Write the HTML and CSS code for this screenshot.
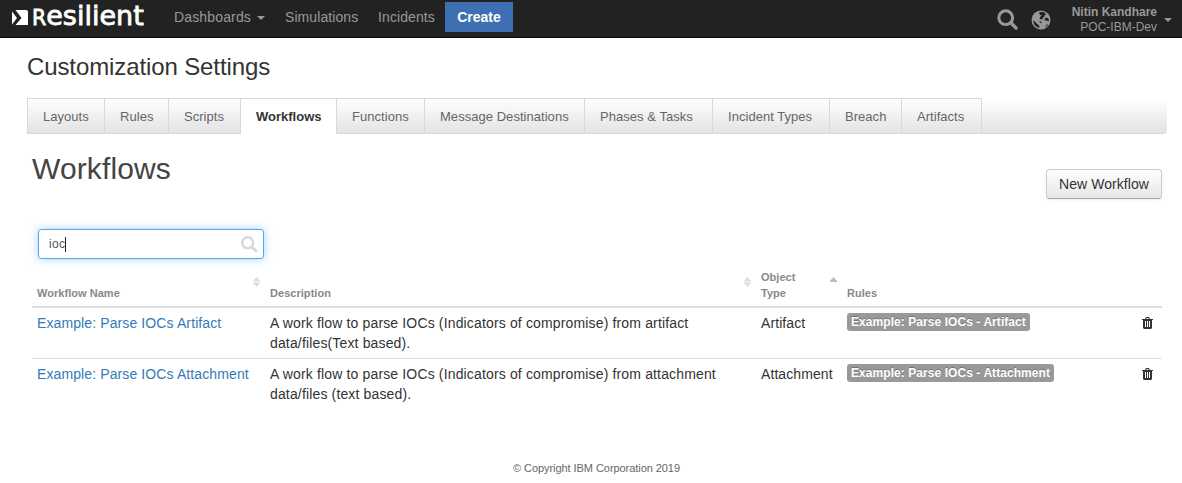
FILE: index.html
```html
<!DOCTYPE html>
<html lang="en">
<head>
<meta charset="utf-8">
<title>Customization Settings</title>
<link rel="stylesheet" href="styles.css">
</head>
<body>
<header class="navbar">
  <a class="brand"><svg width="136" height="36" viewBox="0 0 136 36">
    <path fill="#fff" d="M0 11.500 5 18 0 24.500ZM3.500 10H14Q16 10 16 12V25H3.500L9.500 18Z"/>
    <text class="wordmark" x="20" y="24.700"><tspan class="cap">R</tspan><tspan>esilient</tspan></text>
  </svg></a>
  <nav class="menu">
    <a class="dash">Dashboards <i class="caret"></i></a><a class="sim">Simulations</a><a class="inc">Incidents</a><a class="create">Create</a>
  </nav>
  <div class="tools">
    <svg class="search" width="22" height="22" viewBox="0 0 22 22" fill="none" stroke="#999"><circle cx="8.700" cy="8.700" r="6.900" stroke-width="3"/><path d="M13.800 13.800 19 19" stroke-width="3.400" stroke-linecap="round"/></svg>
    <svg class="globe" width="20" height="20" viewBox="0 0 20 20"><circle cx="10" cy="10" r="9.500" fill="#999"/><path fill="#222" d="M8 2.500 11 1.800 13.500 2.500 15 4.500 13 6 13.500 7 11.500 7.500 12 9 10 9.500 8.500 8.500 9.500 6.500 11 5.500 9 5ZM14 8 16 7.500 18 9.500 17.500 11.500 15.500 10.500 13.500 10.500ZM2 10.500 4 11.500 6 14 7.500 15 9 17.500 6.500 17.500 3.500 15ZM8 11 10 11.500 11 13 9.500 13ZM14 16.500 17 13.500 16 16.500Z"/></svg>
    <div class="user"><b>Nitin Kandhare</b><span>POC-IBM-Dev</span></div>
    <i class="caret"></i>
  </div>
</header>
<main>
  <h1>Customization Settings</h1>
  <nav class="tabs"><a class="t1">Layouts</a><a class="t2">Rules</a><a class="t3">Scripts</a><a class="t4 active">Workflows</a><a class="t5">Functions</a><a class="t6">Message Destinations</a><a class="t7">Phases &amp; Tasks</a><a class="t8">Incident Types</a><a class="t9">Breach</a><a class="t10">Artifacts</a></nav>
  <section class="panel">
    <div class="heading"><h2>Workflows</h2><button class="new">New Workflow</button></div>
    <div class="filter"><span>ioc</span><i class="cursor"></i>
      <svg width="17" height="17" viewBox="0 0 17 17" fill="none" stroke="#d6d6d6"><circle cx="6.700" cy="6.700" r="5.500" stroke-width="2.300"/><path d="M11 11 15 15" stroke-width="2.600" stroke-linecap="round"/></svg>
    </div>
    <table>
      <colgroup><col class="c1"><col class="c2"><col class="c3"><col class="c4"><col class="c5"></colgroup>
      <thead><tr>
        <th>Workflow Name<svg class="sort" width="7" height="10" viewBox="0 0 7 10" fill="#ddd"><path d="M3.500 0 7 4V4.500H0V4ZM0 5.500H7V6L3.500 10 0 6Z"/></svg></th>
        <th>Description<svg class="sort" width="7" height="10" viewBox="0 0 7 10" fill="#ddd"><path d="M3.500 0 7 4V4.500H0V4ZM0 5.500H7V6L3.500 10 0 6Z"/></svg></th>
        <th>Object<br>Type<svg class="sort" width="7" height="10" viewBox="0 0 7 10" fill="#bbb"><path d="M3.500 0 7 4V5H0V4Z"/></svg></th>
        <th>Rules</th><th></th>
      </tr></thead>
      <tbody>
        <tr><td><a class="link">Example: Parse IOCs Artifact</a></td><td class="desc">A work flow to parse IOCs (Indicators of compromise) from artifact<br>data/files(Text based).</td><td>Artifact</td><td><span class="label">Example: Parse IOCs - Artifact</span></td>
          <td class="del"><svg width="11" height="12" viewBox="0 0 11 12"><path fill="#333" fill-rule="evenodd" d="M0 2H3L4 0H7L8 2H11V3H10V11L9 12H2L1 11V3H0ZM4.300 2H6.700L6.300 1H4.700ZM3 4V10H4V4ZM5 4V10H6V4ZM7 4V10H8V4Z"/></svg></td></tr>
        <tr><td><a class="link">Example: Parse IOCs Attachment</a></td><td class="desc">A work flow to parse IOCs (Indicators of compromise) from attachment<br>data/files (text based).</td><td>Attachment</td><td><span class="label">Example: Parse IOCs - Attachment</span></td>
          <td class="del"><svg width="11" height="12" viewBox="0 0 11 12"><path fill="#333" fill-rule="evenodd" d="M0 2H3L4 0H7L8 2H11V3H10V11L9 12H2L1 11V3H0ZM4.300 2H6.700L6.300 1H4.700ZM3 4V10H4V4ZM5 4V10H6V4ZM7 4V10H8V4Z"/></svg></td></tr>
      </tbody>
    </table>
  </section>
</main>
<footer>© Copyright IBM Corporation 2019</footer>
</body>
</html>
```
FILE: styles.css
```css
* { box-sizing: border-box; }
body { margin: 0; height: 483px; overflow: hidden; background: #fff; color: #333; font: 14px/20px "Liberation Sans", Arial, sans-serif; }
.navbar { display: flex; height: 38px; background: #222; border-bottom: 1px solid #080808; color: #999; }
.brand { width: 152px; padding-left: 12px; }
.brand svg, .tools svg { display: block; }
.wordmark { font: 27px "DejaVu Sans", sans-serif; fill: #fff; stroke: #fff; stroke-width: .8px; }
.cap { font-size: 20.5px; }
.menu { display: flex; padding: 2px 0 0 22px; height: 32px; line-height: 30px; white-space: nowrap; }
.dash { width: 111px; letter-spacing: .15px; }
.sim { width: 93px; letter-spacing: .08px; }
.inc { width: 67px; letter-spacing: .1px; }
.caret { display: inline-block; border: 4px solid transparent; border-top-color: #999; border-bottom: 0; vertical-align: 2px; }
.dash .caret { margin-left: 2px; }
.create { width: 68px; background: #3e6fb2; color: #fff; font-weight: bold; text-align: center; }
.tools { display: flex; margin-left: auto; padding: 5px 10px 0 0; }
.search { margin: 4px 12px 0 0; }
.globe { margin: 5px 20px 0 0; }
.user { width: 86px; display: flex; flex-direction: column; align-items: flex-end; white-space: nowrap; font-size: 12px; line-height: 15px; }
.tools .caret { margin: 13px 0 0 7px; height: 4px; }
main { padding: 0 15px 0 27px; }
h1 { margin: 0; padding-top: 14px; height: 60px; font-size: 24px; line-height: 30px; font-weight: normal; letter-spacing: -.11px; }
.tabs { display: flex; height: 36px; background: linear-gradient(#fff, #e3e3e3); border-bottom: 1px solid #d9d9d9; border-radius: 0 0 4px; color: #666; font-size: 13px; line-height: 36px; letter-spacing: .04px; white-space: nowrap; }
.tabs a { height: 35px; border-top: 1px solid #d9d9d9; border-left: 1px solid #d9d9d9; padding-left: 15px; }
.tabs .active { height: 36px; background: #fff; color: #333; font-weight: bold; letter-spacing: 0; }
.t1 { width: 77px; } .t2 { width: 64px; } .t3 { width: 72px; } .t4 { width: 96px; } .t5 { width: 88px; }
.t6 { width: 160px; } .t7 { width: 128px; } .t8 { width: 117px; } .t9 { width: 72px; }
.tabs .t10 { width: 81px; border-right: 1px solid #d9d9d9; }
.panel { padding: 15px 5px 0; }
.heading { display: flex; justify-content: space-between; height: 80px; }
h2 { margin: 0; font-size: 30px; line-height: 40px; font-weight: normal; letter-spacing: .12px; color: #444; }
.new { margin-top: 20px; width: 116px; height: 30px; padding: 0; border: 1px solid #ccc; border-bottom-color: #aaa; border-radius: 4px; background: linear-gradient(#fff, #e6e6e6); box-shadow: 0 1px 2px rgba(0,0,0,.08); color: #333; font: 14px/28px "Liberation Sans", Arial, sans-serif; letter-spacing: .05px; }
.filter { display: flex; align-items: center; width: 226px; height: 30px; margin-left: 6px; padding: 0 5px 0 10px; border: 1px solid #52a8ec; border-radius: 3px; box-shadow: 0 0 8px rgba(82,168,236,.5); color: #555; font-size: 12px; letter-spacing: .3px; }
.cursor { width: 1px; height: 15px; background: #222; }
.filter svg { margin-left: auto; }
table { width: 1130px; margin-top: 5px; border-collapse: separate; border-spacing: 0; table-layout: fixed; }
.c1 { width: 233px; } .c2 { width: 491px; } .c3 { width: 86px; } .c4 { width: 280px; }
th { position: relative; height: 44px; padding: 5px 5px 5px; border-bottom: 2px solid #ddd; vertical-align: bottom; text-align: left; font-size: 11px; line-height: 16px; letter-spacing: .04px; color: #888; }
.sort { position: absolute; right: 5px; top: 13px; }
td { height: 51px; padding: 5px; vertical-align: top; white-space: nowrap; letter-spacing: .08px; }
tbody tr:first-child td { border-bottom: 1px solid #ddd; }
.desc { letter-spacing: .15px; }
.link { color: #337ab7; letter-spacing: .11px; }
.label { display: inline-block; height: 18px; padding: 0 4px; border-radius: 3px; background: #999; color: #fff; font-size: 12px; line-height: 18px; font-weight: bold; letter-spacing: .065px; text-shadow: 0 -1px 0 rgba(0,0,0,.25); vertical-align: top; }
.del { text-align: right; padding-right: 9px; }
.del svg { display: block; margin: 4px 0 0 auto; }
footer { margin-top: 48px; padding-left: 11px; text-align: center; font-size: 11px; letter-spacing: -.06px; color: #666; }
```
